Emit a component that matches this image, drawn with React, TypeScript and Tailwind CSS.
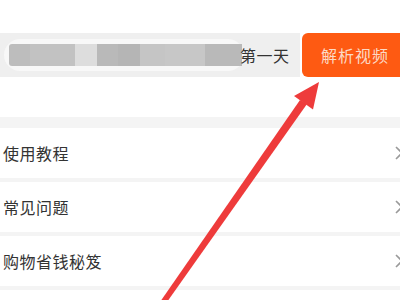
const blocks = [
  { w: "w-[21px]", c: "bg-[#bdbdbd]" },
  { w: "w-[45px]", c: "bg-[#c2c2c2]" },
  { w: "w-[22px]", c: "bg-[#dddddd]" },
  { w: "w-[21px]", c: "bg-[#b9b9b9]" },
  { w: "w-[22px]", c: "bg-[#b5b5b5]" },
  { w: "w-[25px]", c: "bg-[#c5c5c5]" },
  { w: "w-[40px]", c: "bg-[#c7c7c7]" },
  { w: "w-[37px]", c: "bg-[#b9b9b9]" },
];

const rows = ["使用教程", "常见问题", "购物省钱秘笈"];

function Chevron() {
  return (
    <svg width="10" height="16" viewBox="0 0 10 16" className="shrink-0">
      <path d="M2 2 L8 8 L2 14" fill="none" stroke="#9a9a9a" strokeWidth="1.6" />
    </svg>
  );
}

export default function App() {
  return (
    <div
      className="relative h-[300px] w-[400px] overflow-hidden bg-white text-[#333]"
      style={{ fontFamily: '"Noto Sans CJK SC", "Noto Sans", sans-serif' }}
    >
      <div className="h-[33px]" />

      <div className="flex h-[44px] w-[406px]">
        <div className="flex w-[300px] items-center bg-[#efefef] pl-[4px]">
          <div className="flex h-[32px] w-[240px] items-center rounded-full bg-[#f8f8f8] pl-[5px]">
            <div className="flex h-[22px] overflow-hidden rounded-l-[3px]">
              {blocks.map((b, i) => (
                <div key={i} className={`${b.w} ${b.c} h-full`} />
              ))}
            </div>
          </div>
          <span className="-ml-[4px] text-[16px] leading-none tracking-[0.5px]">第一天</span>
        </div>
        <div className="ml-[2px] flex flex-1 items-center rounded-[6px] bg-[#fe5a12] pl-[19px] text-[16px] tracking-[1px] text-[#fcd9c4]">
          解析视频
        </div>
      </div>

      <div className="h-[40px]" />

      <div className="flex w-[404px] flex-col gap-[4px] bg-[#f4f4f4] pt-[11px]">
        {rows.map((r) => (
          <div key={r} className="flex h-[50px] items-center justify-between bg-white pl-[3px]">
            <span className="text-[16px] tracking-[0.5px] text-[#333]">{r}</span>
            <Chevron />
          </div>
        ))}
        <div className="h-[20px] bg-white" />
      </div>

      <svg className="absolute left-0 top-0" width="400" height="300" viewBox="0 0 400 300">
        <polygon points="160,302 167,302 307,104 300,100" fill="#ee3b3b" />
        <polygon points="319,82 294,96 313,109.5" fill="#ee3b3b" />
      </svg>
    </div>
  );
}
